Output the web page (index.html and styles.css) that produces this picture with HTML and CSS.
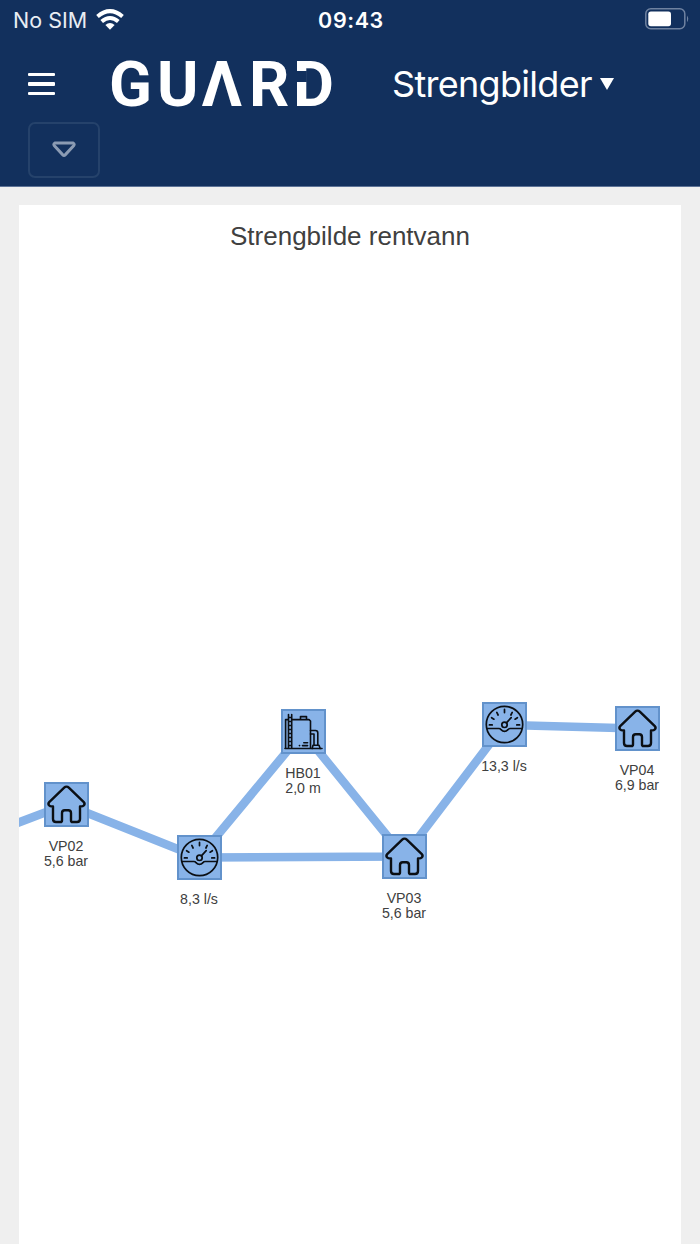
FILE: index.html
```html
<!DOCTYPE html>
<html lang="no">

<head>
<meta charset="UTF-8">
<meta name="viewport" content="width=device-width, initial-scale=1.0">
<title>Strengbilder</title>
<link rel="stylesheet" href="styles.css">
</head>

<body>

<!-- shared icons -->
<svg class="defs" width="0" height="0">
<symbol id="house" viewBox="0 0 45 45">
<path d="M22.5 4.6 Q23.8 4.6 24.8 5.6 L39.8 20.1 Q41.3 21.8 39.9 23.4 Q39.2 24.5 36 24.5 V37 Q36 40 33 40 H28.6 Q27 40 27 38.4 V31 Q27 28.3 24.3 28.3 H20.7 Q18 28.3 18 31 V38.4 Q18 40 16.4 40 H12 Q9 40 9 37 V24.5 Q5.8 24.5 5.1 23.4 Q3.7 21.8 5.2 20.1 L20.2 5.6 Q21.2 4.6 22.5 4.6 Z"/>
</symbol>
<symbol id="meter" viewBox="0 0 45 45">
<g stroke-width="1.7">
<circle cx="22.5" cy="22.5" r="18.2"/>
<circle cx="22.5" cy="22.8" r="2.7"/>
<path d="M24.4 20.8 L29.2 15.6 M5 26.5 H16.8 Q18.3 26.5 19 27.6 Q22.5 31.3 26 27.6 Q26.7 26.5 28.2 26.5 H40 M22.5 7.4 V10.6 M14.8 10.4 L16.1 13 M30.2 10.4 L28.9 13 M9.6 15.7 L11.9 17.2 M35.4 15.7 L33.1 17.2 M7.4 22.9 H10.2 M34.8 22.9 H37.6"/>
</g>
</symbol>
<symbol id="tank" viewBox="0 0 45 45">
<g stroke-width="1.6">
<path d="M4 39.5 H41 M7.5 5.5 V39 M10.7 5.5 V39 M7.5 8.5 H10.7 M7.5 12.5 H10.7 M7.5 16.5 H10.7 M7.5 20.5 H10.7 M7.5 24.5 H10.7 M7.5 28.5 H10.7 M7.5 32.5 H10.7 M7.5 36.5 H10.7"/>
<path d="M7 10.6 H4.6 V39 M11 10.6 H28 L29.5 12 V39 M19.5 10 V7.6 H25.5 V10"/>
<path d="M29.5 21.5 H34.5 Q36.8 21.5 36.8 24 V36 M29.5 25 H33 V36 M32 36.3 H38 L39.2 39.5 M32 36.3 L31.2 39.5"/>
<path d="M22.8 33.7 H26.6 M21.5 36.6 H26.6 M18.4 36.6 H18.6"/>
</g>
</symbol>
</svg>

<header class="header">
<div class="statusbar">
<div class="carrier">
<span>No SIM</span>
<svg width="28" height="21" viewBox="0 0 28 21">
<g fill="none" stroke="#fff" stroke-width="4">
<path d="M1.5 7.6 Q14 -3.2 26.5 7.6"/>
<path d="M5.7 12.6 Q14 5.4 22.3 12.6"/>
</g>
<path fill="#fff" d="M9.4 15.9 Q14 12.2 18.6 15.9 L14 20.7 Z"/>
</svg>
</div>
<span class="clock">09:43</span>
<svg class="battery" width="45" height="22" viewBox="0 0 45 22">
<rect x="1.8" y="0.8" width="39" height="20" rx="5" fill="none" stroke="#6f82a0" stroke-width="1.5"/>
<rect x="4.3" y="3.6" width="22.7" height="14.6" rx="2.6" fill="#fff"/>
<path d="M43 7.4 Q45.5 10.8 43 14.2 Z" fill="#6f82a0"/>
</svg>
</div>

<div class="navbar">
<div class="menu">
<span></span>
<span></span>
<span></span>
</div>
<svg class="logo" width="228" height="80" viewBox="0 0 228 80">
<text y="63" x="0 48 92.5 140 184">GUΛRD</text>
<rect class="cutout" x="185" y="28" width="12.8" height="11"/>
</svg>
<div class="page-select">
<span>Strengbilder</span>
<i class="caret"></i>
</div>
</div>

<button class="dropdown">
<svg width="24" height="17" viewBox="0 0 24 17">
<path d="M3 2 H21 Q23 3.2 21.6 4.8 L13.4 13.6 Q12 15 10.6 13.6 L2.4 4.8 Q1 3.2 3 2 Z"/>
</svg>
</button>
</header>

<main class="content">
<div class="panel">
<h1>Strengbilde rentvann</h1>

<!-- pipes between the stations -->
<svg class="pipes" width="662" height="1039" viewBox="0 0 662 1039">
<path d="M-20 625 L47 599.5 L180 652.5 L385 651.5 L485 520 L618 523.5 M180 652.5 L284 527 L385 651.5"/>
</svg>

<div class="node vp02">
<svg class="icon"><use href="#house"/></svg>
<p>VP02<br>5,6 bar</p>
</div>
<div class="node meter1">
<svg class="icon"><use href="#meter"/></svg>
<p>8,3 l/s</p>
</div>
<div class="node hb01">
<svg class="icon"><use href="#tank"/></svg>
<p>HB01<br>2,0 m</p>
</div>
<div class="node vp03">
<svg class="icon"><use href="#house"/></svg>
<p>VP03<br>5,6 bar</p>
</div>
<div class="node meter2">
<svg class="icon"><use href="#meter"/></svg>
<p>13,3 l/s</p>
</div>
<div class="node vp04">
<svg class="icon"><use href="#house"/></svg>
<p>VP04<br>6,9 bar</p>
</div>
</div>
</main>

</body>

</html>
```

FILE: styles.css
```css
* {
box-sizing: border-box;
}

body {
margin: 0;
height: 1244px;
overflow: hidden;
display: flex;
flex-direction: column;
font-family: "Liberation Sans", Arial, sans-serif;
background-color: #efefef;
}

.defs {
position: absolute;
}

.header {
height: 187px;
flex-shrink: 0;
background-color: #12305d;
border-bottom: 1px solid #5d7397;
color: #fff;
font-family: Inter, sans-serif;
}

.statusbar {
height: 40px;
padding: 0 11px 0 13px;
display: grid;
grid-template-columns: 1fr auto 1fr;
align-items: center;
font-size: 21.5px;
line-height: 38px;
}

.carrier {
display: flex;
align-items: center;
gap: 9px;
color: #e9edf3;
}

.carrier svg {
margin-bottom: 2px;
}

.clock {
font-weight: 600;
font-size: 21.5px;
letter-spacing: 0.6px;
}

.battery {
justify-self: end;
margin-bottom: 3px;
}

.navbar {
height: 82px;
padding-left: 28px;
display: flex;
align-items: center;
}

.menu {
width: 27px;
margin: 6px 54px 0 0;
display: flex;
flex-direction: column;
gap: 6px;
}

.menu span {
height: 3.3px;
border-radius: 1px;
background-color: #fff;
}

.logo {
margin-top: 4px;
}

.logo text {
font-family: Roboto, sans-serif;
font-size: 63px;
font-weight: 700;
fill: #fff;
}

.logo .cutout {
fill: #12305d;
}

.page-select {
margin: 6px 0 0 55px;
display: flex;
align-items: center;
gap: 8px;
font-size: 36px;
letter-spacing: -0.7px;
}

.caret {
border: 7.5px solid transparent;
border-top: 12px solid #fff;
border-bottom: 0;
}

.dropdown {
width: 72px;
height: 56px;
margin-left: 28px;
padding: 0 0 2px;
display: flex;
align-items: center;
justify-content: center;
background: none;
border: 2px solid #25426b;
border-radius: 7px;
}

.dropdown path {
fill: none;
stroke: #8b9bb3;
stroke-width: 3;
}

.content {
flex: 1;
padding: 18px 19px 0;
}

.panel {
position: relative;
height: 1039px;
overflow: hidden;
background-color: #fff;
}

.panel h1 {
margin: 0;
padding-top: 16px;
text-align: center;
font-size: 26px;
font-weight: 400;
line-height: 31px;
color: #404040;
}

.pipes {
position: absolute;
left: 0;
top: 0;
}

.pipes path {
fill: none;
stroke: #88b3e8;
stroke-width: 8.5;
}

/* stations */
.node {
position: absolute;
width: 90px;
display: flex;
flex-direction: column;
align-items: center;
}

.node .icon {
width: 45px;
height: 45px;
background-color: #88b3e8;
outline: 2px solid #6292cb;
outline-offset: -2px;
fill: none;
stroke: #0b0f14;
stroke-width: 2.4;
stroke-linecap: round;
stroke-linejoin: round;
}

.node p {
margin: 12px 0 0;
text-align: center;
font-size: 14.2px;
line-height: 14.7px;
white-space: nowrap;
color: #404040;
}

.vp02 {
left: 2px;
top: 577px;
}

.meter1 {
left: 135px;
top: 630px;
}

.hb01 {
left: 239px;
top: 504px;
}

.vp03 {
left: 340px;
top: 629px;
}

.meter2 {
left: 440px;
top: 497px;
}

.vp04 {
left: 573px;
top: 501px;
}
```
